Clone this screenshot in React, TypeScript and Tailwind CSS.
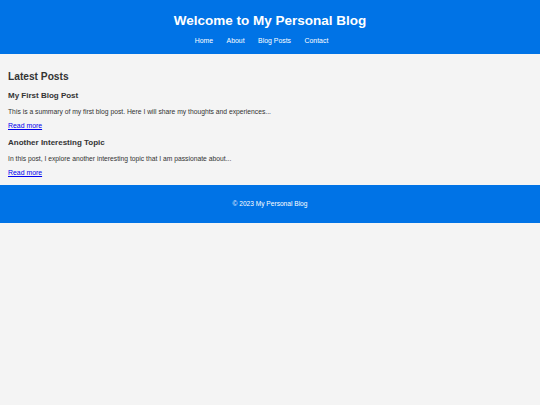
export default function App() {
  const font = { fontFamily: '"Liberation Sans", Arial, sans-serif' };
  return (
    <div className="min-h-[405px] w-full bg-[#f4f4f4] text-[#333]" style={font}>
      <header className="bg-[#0073e6] pt-[13px] pb-[8px] text-white text-center">
        <h1 className="text-[13.5px] font-bold leading-[16px]">Welcome to My Personal Blog</h1>
        <nav className="mt-[7px] flex justify-center gap-[13.5px] pr-[17px] text-[6.9px] leading-[10px]">
          <a href="#">Home</a>
          <a href="#">About</a>
          <a href="#">Blog Posts</a>
          <a href="#">Contact</a>
        </nav>
      </header>
      <main className="px-[8px] pt-[16px] pb-[7px]">
        <h2 className="text-[10.2px] font-bold leading-[14px]">Latest Posts</h2>
        <article className="mt-[6px]">
          <h3 className="text-[8px] font-bold leading-[12px]">My First Blog Post</h3>
          <p className="mt-[5px] text-[6.75px] leading-[10px]">
            This is a summary of my first blog post. Here I will share my thoughts and experiences...
          </p>
          <a href="#" className="mt-[4px] block text-[6.9px] leading-[10px] text-[#0000ee] underline">
            Read more
          </a>
        </article>
        <article className="mt-[6px]">
          <h3 className="text-[8px] font-bold leading-[12px]">Another Interesting Topic</h3>
          <p className="mt-[5px] text-[6.75px] leading-[10px]">
            In this post, I explore another interesting topic that I am passionate about...
          </p>
          <a href="#" className="mt-[4px] block text-[6.9px] leading-[10px] text-[#0000ee] underline">
            Read more
          </a>
        </article>
      </main>
      <footer className="bg-[#0073e6] pt-[14px] pb-[14px] text-center text-white text-[6.6px] leading-[10px]">
        © 2023 My Personal Blog
      </footer>
    </div>
  );
}
